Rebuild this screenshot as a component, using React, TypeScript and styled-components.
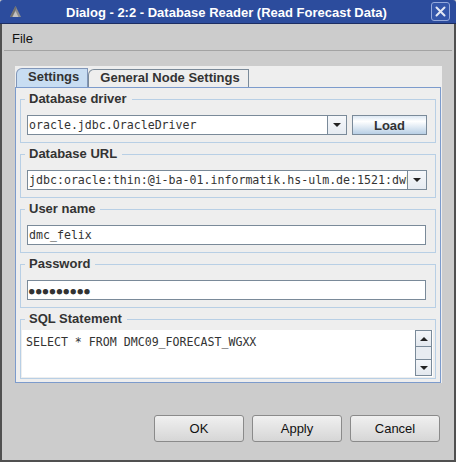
import React from "react";
import styled, { createGlobalStyle } from "styled-components";

const SANS = `"Liberation Sans", Arial, sans-serif`;
const MONO = `"DejaVu Sans Mono", "Liberation Mono", monospace`;

const Global = createGlobalStyle`
  html, body { margin: 0; padding: 0; background: #cccccc; }
  body { width: 456px; height: 462px; overflow: hidden; }
  * { box-sizing: border-box; }
`;

const Window = styled.div`
  width: 456px;
  height: 462px;
  display: flex;
  flex-direction: column;
  background: #cccccc;
  font-family: ${SANS};
`;

const TitleBar = styled.div`
  height: 24px;
  flex: none;
  display: flex;
  align-items: center;
  background: #2c4c9d;
  border-bottom: 1px solid #1c2d62;
  border-radius: 3px 3px 0 0;
  padding: 0 6px 0 9px;
`;

const TitleText = styled.div`
  flex: 1;
  text-align: center;
  color: #ffffff;
  font: bold 13px ${SANS};
  line-height: 22px;
  padding-top: 2px;
  white-space: nowrap;
`;

const CloseBox = styled.div`
  width: 19px;
  height: 19px;
  border: 1px solid #95a9dc;
  border-radius: 3px;
  background: #3456aa;
  display: flex;
  align-items: center;
  justify-content: center;
`;

const Frame = styled.div`
  flex: 1;
  display: flex;
  flex-direction: column;
  border: 2px solid #505050;
  border-top: none;
`;

const MenuBar = styled.div`
  height: 26px;
  flex: none;
  display: flex;
  align-items: center;
  padding: 2px 0 0 10px;
  font: 13px ${SANS};
  color: #111;
`;

const Separator = styled.div`
  height: 1px;
  flex: none;
  margin: 0 2px;
  background: #a3a3a3;
`;

const Content = styled.div`
  display: flex;
  flex-direction: column;
  padding: 15px 12px 0 13px;
`;

const TabbedPane = styled.div`
  height: 317px;
  display: flex;
  flex-direction: column;
  background: #eeeeee;
`;

const TabRow = styled.div`
  height: 21px;
  flex: none;
  display: flex;
  align-items: flex-end;
  padding-left: 1px;
`;

const Tab = styled.div<{ $active?: boolean }>`
  height: ${(p) => (p.$active ? 19 : 18)}px;
  line-height: ${(p) => (p.$active ? 18 : 17)}px;
  padding: 0 8px 0 11px;
  font: bold 13px ${SANS};
  color: #333333;
  border: 1px solid ${(p) => (p.$active ? "#8196b8" : "#7a8a99")};
  border-bottom: none;
  border-top-left-radius: 6px;
  background: ${(p) => (p.$active ? "#c8ddf2" : "#eeeeee")};
  margin-left: ${(p) => (p.$active ? 0 : 0)}px;
  white-space: nowrap;
`;

const Panel = styled.div`
  flex: 1;
  margin-right: 1px;
  border: 1px solid #7c9bcc;
  padding: 4px 4px 3px 4px;
  display: flex;
  flex-direction: column;
  gap: 4px;
`;

const Group = styled.fieldset<{ $tight?: boolean }>`
  margin: 0;
  min-width: 0;
  border: 1px solid #b8cfe5;
  padding: ${(p) => (p.$tight ? "4px 2px 1px 1px" : "9px 8px 7px 6px")};
`;

const Legend = styled.legend<{ $tight?: boolean }>`
  font: bold 13px ${SANS};
  color: #333333;
  line-height: 14px;
  padding: 0 5px 0 4px;
  margin-left: ${(p) => (p.$tight ? 3 : -2)}px;
`;

const Row = styled.div`
  display: flex;
  gap: 5px;
`;

const Combo = styled.div`
  flex: 1;
  height: 20px;
  display: flex;
  border: 1px solid #7a8a99;
  background: #ffffff;
  min-width: 0;
`;

const ComboText = styled.div`
  flex: 1;
  min-width: 0;
  overflow: hidden;
  white-space: nowrap;
  font: 11.6px ${MONO};
  line-height: 18px;
  color: #333333;
  padding-left: 1px;
`;

const ComboArrow = styled.div`
  width: 19px;
  flex: none;
  border-left: 1px solid #7a8a99;
  background: linear-gradient(#f6f8fb, #e6ebf1);
  display: flex;
  align-items: center;
  justify-content: center;
`;

const Triangle = styled.div<{ $up?: boolean }>`
  width: 0;
  height: 0;
  border-left: 4px solid transparent;
  border-right: 4px solid transparent;
  ${(p) => (p.$up ? "border-bottom: 4px solid #222;" : "border-top: 4px solid #222;")}
`;

const LoadButton = styled.div`
  width: 75px;
  height: 20px;
  flex: none;
  border: 1px solid #7a8a99;
  background: linear-gradient(#dde8f3 0%, #ffffff 30%, #b8cfe5 100%);
  font: bold 13px ${SANS};
  color: #333333;
  display: flex;
  align-items: center;
  justify-content: center;
`;

const Field = styled.div`
  height: 20px;
  margin-right: 1px;
  border: 1px solid #7a8a99;
  background: #ffffff;
  font: 11.6px ${MONO};
  line-height: 18px;
  color: #333333;
  padding-left: 1px;
  white-space: nowrap;
  overflow: hidden;
`;

const Dots = styled.span`
  font: 9px ${MONO};
  letter-spacing: 1.5px;
  color: #333333;
`;

const TextArea = styled.div`
  height: 47px;
  display: flex;
  background: #ffffff;
`;

const TextBody = styled.div`
  flex: 1;
  font: 11.6px ${MONO};
  line-height: 14px;
  color: #333333;
  padding: 5px 4px 0 4px;
  white-space: pre;
`;

const ScrollBar = styled.div`
  width: 17px;
  height: 46px;
  flex: none;
  margin-right: 1px;
  display: flex;
  flex-direction: column;
  border: 1px solid #7a8a99;
  background: #eeeeee;
`;

const ScrollButton = styled.div`
  height: 15px;
  flex: none;
  display: flex;
  align-items: center;
  justify-content: center;
  background: linear-gradient(#f4f6f9, #e3e8ee);
`;

const ScrollThumb = styled.div`
  flex: 1;
  border-top: 1px solid #7a8a99;
  border-bottom: 1px solid #7a8a99;
  background: #e8ecf1;
`;

const ButtonRow = styled.div`
  display: flex;
  justify-content: flex-end;
  gap: 8px;
  margin-top: 32px;
  padding-right: 14px;
`;

const DialogButton = styled.div`
  width: 90px;
  height: 27px;
  border: 1px solid #8a8a8a;
  border-radius: 3px;
  background: linear-gradient(#f0f0f0, #d6d6d6);
  font: 13px ${SANS};
  color: #111111;
  display: flex;
  align-items: center;
  justify-content: center;
`;

const AppIcon = () => (
  <svg width="13" height="13" viewBox="0 0 13 13">
    <path d="M1 12 L6.5 1 L12 12 Z" fill="#8e8e8e" />
    <path d="M6.5 6 L9.5 12 L3.5 12 Z" fill="#c2c2c2" />
    <path d="M1 12 L6.5 1 L7.5 3 L3 12 Z" fill="#6f6f6f" />
  </svg>
);

const CloseIcon = () => (
  <svg width="11" height="11" viewBox="0 0 11 11">
    <path d="M1.5 1.5 L9.5 9.5 M9.5 1.5 L1.5 9.5" stroke="#e4e8f4" strokeWidth="2" strokeLinecap="round" />
  </svg>
);

export default function App() {
  return (
    <Window>
      <Global />
      <TitleBar>
        <AppIcon />
        <TitleText>Dialog - 2:2 - Database Reader (Read Forecast Data)</TitleText>
        <CloseBox>
          <CloseIcon />
        </CloseBox>
      </TitleBar>
      <Frame>
        <MenuBar>File</MenuBar>
        <Separator />
        <Content>
          <TabbedPane>
            <TabRow>
              <Tab $active>Settings</Tab>
              <Tab>General Node Settings</Tab>
            </TabRow>
            <Panel>
              <Group>
                <Legend>Database driver</Legend>
                <Row>
                  <Combo>
                    <ComboText>oracle.jdbc.OracleDriver</ComboText>
                    <ComboArrow>
                      <Triangle />
                    </ComboArrow>
                  </Combo>
                  <LoadButton>Load</LoadButton>
                </Row>
              </Group>
              <Group>
                <Legend>Database URL</Legend>
                <Combo>
                  <ComboText>jdbc:oracle:thin:@i-ba-01.informatik.hs-ulm.de:1521:dwh</ComboText>
                  <ComboArrow>
                    <Triangle />
                  </ComboArrow>
                </Combo>
              </Group>
              <Group>
                <Legend>User name</Legend>
                <Field>dmc_felix</Field>
              </Group>
              <Group>
                <Legend>Password</Legend>
                <Field>
                  <Dots>●●●●●●●●●</Dots>
                </Field>
              </Group>
              <Group $tight>
                <Legend $tight>SQL Statement</Legend>
                <TextArea>
                  <TextBody>SELECT * FROM DMC09_FORECAST_WGXX</TextBody>
                  <ScrollBar>
                    <ScrollButton>
                      <Triangle $up />
                    </ScrollButton>
                    <ScrollThumb />
                    <ScrollButton>
                      <Triangle />
                    </ScrollButton>
                  </ScrollBar>
                </TextArea>
              </Group>
            </Panel>
          </TabbedPane>
        </Content>
        <ButtonRow>
          <DialogButton>OK</DialogButton>
          <DialogButton>Apply</DialogButton>
          <DialogButton>Cancel</DialogButton>
        </ButtonRow>
      </Frame>
    </Window>
  );
}
